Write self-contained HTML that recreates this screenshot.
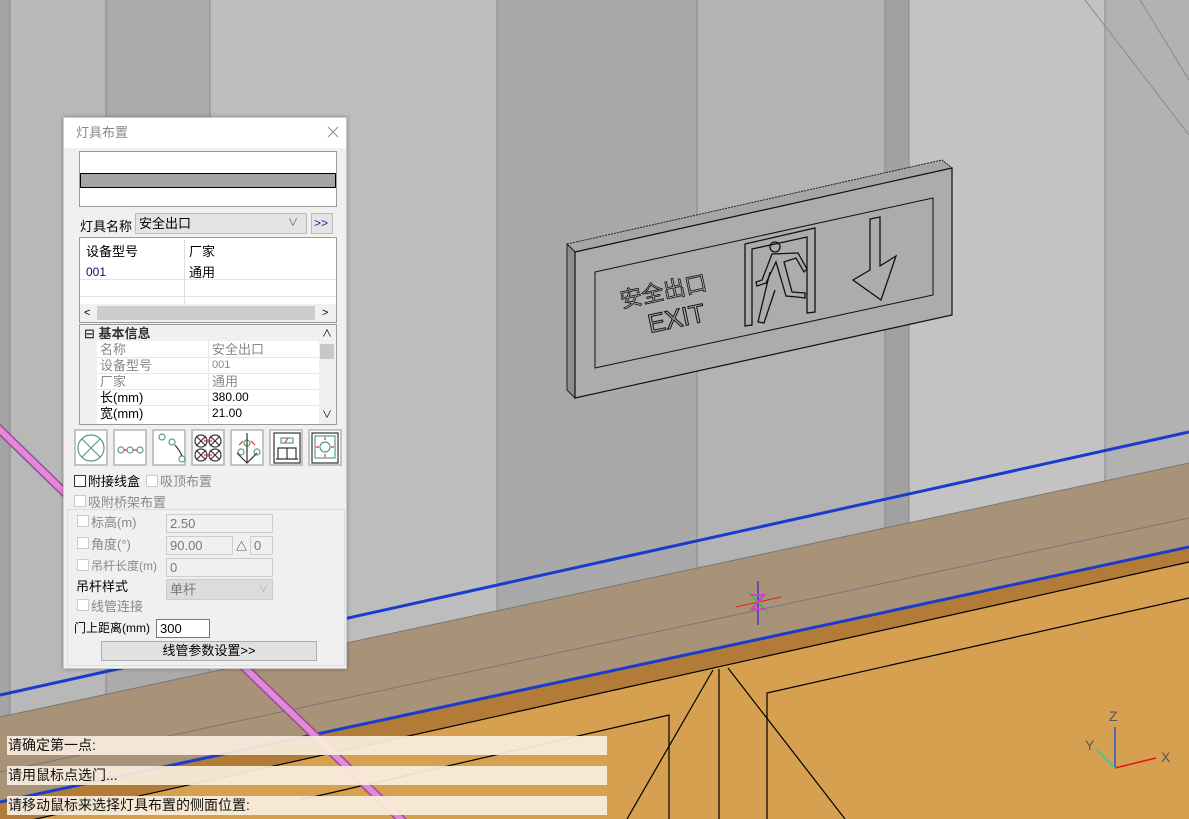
<!DOCTYPE html>
<html><head><meta charset="utf-8"><style>
*{box-sizing:border-box;margin:0;padding:0}
body{width:1189px;height:819px;overflow:hidden;position:relative;font-family:"Liberation Sans","Noto Sans CJK SC",sans-serif;font-size:13px;color:#000;background:#b4b4b4}
svg.bg{position:absolute;left:0;top:0}
.dlg{position:absolute;left:63px;top:117px;width:284px;height:552px;background:#f0f0f0;border:1px solid #c8c8c8;box-shadow:0 0 4px rgba(0,0,0,.3)}
.a{position:absolute}
.t{position:absolute;white-space:nowrap;line-height:15px}
.cb{position:absolute;width:12px;height:12px;border:1px solid #333;background:#fff}
.cb.g{border-color:#ccc}
.in{position:absolute;border:1px solid #ccc;background:#f0f0f0;color:#777;padding-left:3px;line-height:17px}
.gray{color:#888}
.bar{position:absolute;left:7px;width:600px;height:19px;background:rgba(250,238,222,.92);font-size:14px;line-height:19px;padding-left:1px;color:#111}
</style></head><body>
<svg class="bg" width="1189" height="819" viewBox="0 0 1189 819">
<rect x="0" y="0" width="1189" height="819" fill="#b0b0b0"/>
<rect x="0" y="0" width="10" height="819" fill="#a4a4a4"/>
<rect x="10" y="0" width="96" height="819" fill="#b8b8b8"/>
<rect x="106" y="0" width="104" height="819" fill="#ababab"/>
<rect x="210" y="0" width="287" height="819" fill="#bdbdbd"/>
<rect x="497" y="0" width="200" height="819" fill="#a9a9a9"/>
<rect x="697" y="0" width="188" height="819" fill="#b3b3b3"/>
<rect x="885" y="0" width="24" height="819" fill="#a2a2a2"/>
<rect x="909" y="0" width="196" height="819" fill="#c3c3c3"/>
<rect x="1105" y="0" width="84" height="819" fill="#b2b2b2"/>
<g stroke="#8a8a8a" stroke-width="1">
<line x1="10" y1="0" x2="10" y2="819"/><line x1="106" y1="0" x2="106" y2="819"/><line x1="210" y1="0" x2="210" y2="819"/><line x1="497" y1="0" x2="497" y2="819"/><line x1="697" y1="0" x2="697" y2="819"/><line x1="885" y1="0" x2="885" y2="819"/><line x1="909" y1="0" x2="909" y2="819"/><line x1="1105" y1="0" x2="1105" y2="819"/>
<line x1="1085" y1="0" x2="1189" y2="135"/><line x1="1140" y1="0" x2="1189" y2="80"/>
</g>
<line x1="0" y1="695" x2="1189" y2="432" stroke="#1a3ccc" stroke-width="3"/>
<polygon points="0,717 1189,463 1189,547 0,802" fill="#a89278"/>
<line x1="0" y1="717" x2="1189" y2="463" stroke="#777" stroke-width="1"/>
<line x1="0" y1="772" x2="1189" y2="518" stroke="#777" stroke-width="1"/>
<polygon points="0,802 1189,547 1189,562 0,827" fill="#b27c38"/>
<polygon points="0,827 1189,562 1189,819 0,819" fill="#d5a050"/>
<line x1="0" y1="802" x2="1189" y2="547" stroke="#1a3ccc" stroke-width="3"/>
<g stroke="#000" stroke-width="1.2" fill="none">
<line x1="0" y1="827" x2="1189" y2="562"/>
<polyline points="767,819 767,693 1189,598"/>
<polyline points="669,819 669,715 300,800"/>
<line x1="719" y1="669" x2="719" y2="819"/>
<line x1="713" y1="670" x2="627" y2="819"/>
<line x1="728" y1="668" x2="845" y2="819"/>
</g>
<line x1="-5" y1="425" x2="412" y2="830" stroke="#9a4c90" stroke-width="9"/>
<line x1="-5" y1="425" x2="412" y2="830" stroke="#e488dc" stroke-width="6"/>
<g stroke-width="1">
<line x1="758" y1="581" x2="758" y2="625" stroke="#1010ee"/>
<line x1="736" y1="607" x2="781" y2="597" stroke="#e02020"/>
<line x1="748" y1="592" x2="768" y2="613" stroke="#20c020"/>
<path d="M750,595 L764,595 L752,609 L766,609" stroke="#d040d0" stroke-width="2" fill="none"/>
</g>
<polygon points="567,244 942,160 952,168 575,252" fill="#a6a6a6" stroke="#222" stroke-width="1" stroke-dasharray="2,1"/>
<polygon points="567,244 575,252 575,398 567,390" fill="#8e8e8e" stroke="#222"/>
<polygon points="575,252 952,168 952,315 575,398" fill="#acacac" stroke="#111" stroke-width="1.2"/>
<polygon points="595,272 933,198 933,295 595,368" fill="none" stroke="#111"/>
<text x="0" y="0" font-family="Liberation Sans,Noto Sans CJK SC,sans-serif" font-size="22" fill="none" stroke="#111" stroke-width=".8" transform="translate(622,308) rotate(-12)">安全出口</text>
<text x="0" y="0" font-family="Liberation Sans,sans-serif" font-size="26" fill="none" stroke="#111" stroke-width="1" transform="translate(650,333) rotate(-12)">EXIT</text>
<g fill="none" stroke="#111" stroke-width="1.3">
<polygon points="745,244 815,228 815,312 807,313 807,237 752,249 752,325 745,326"/>
<circle cx="775" cy="247" r="5"/>
<path d="M772,254 L762,280 L756,282 L757,286 L766,283 L776,262 L786,296 L797,297 L805,298 L805,293 L792,292 L784,262 L796,258 L804,272 L807,269 L798,253 Z"/>
<path d="M770,272 L762,305 L758,322 L764,323 L775,290"/>
<path d="M875,218 L880,217 L880,266 L896,256 L881,300 L853,280 L870,270 L870,219 Z"/>
</g>
<g font-family="Liberation Sans,sans-serif" font-size="14" fill="#555">
<text x="1109" y="721">Z</text><text x="1085" y="750">Y</text><text x="1161" y="762">X</text></g>
<line x1="1115" y1="768" x2="1115" y2="727" stroke="#2255dd" stroke-width="1.5"/>
<line x1="1115" y1="768" x2="1156" y2="758" stroke="#ee1111" stroke-width="1.5"/>
<line x1="1115" y1="768" x2="1096" y2="749" stroke="#22ccaa" stroke-width="1.5"/>
</svg>

<div class="bar" style="top:736px">请确定第一点:</div>
<div class="bar" style="top:766px">请用鼠标点选门...</div>
<div class="bar" style="top:796px">请移动鼠标来选择灯具布置的侧面位置:</div>

<div class="dlg">
<div class="a" style="left:0;top:0;width:282px;height:30px;background:#fff"></div>
<div class="t" style="left:12px;top:7px;color:#888">灯具布置</div>
<svg class="a" style="left:263px;top:8px" width="12" height="12"><path d="M1,1L11,11M11,1L1,11" stroke="#888" stroke-width="1"/></svg>
<div class="a" style="left:15px;top:33px;width:258px;height:56px;background:#fff;border:1px solid #999"></div>
<div class="a" style="left:16px;top:55px;width:256px;height:15px;background:#a4a4a4;border:1px solid #000"></div>
<div class="t" style="left:16px;top:101px">灯具名称</div>
<div class="a" style="left:71px;top:95px;width:172px;height:21px;background:#e4e4e4;border:1px solid #bbb"></div>
<div class="t" style="left:75px;top:98px">安全出口</div>
<div class="t" style="left:224px;top:98px;color:#555;font-size:10px">∨</div>
<div class="a" style="left:247px;top:95px;width:22px;height:21px;background:#e4e4e4;border:1px solid #bbb"></div>
<div class="t" style="left:250px;top:98px;color:#1a2aa0;font-size:12px">&gt;&gt;</div>
<div class="a" style="left:15px;top:119px;width:258px;height:86px;background:#fff;border:1px solid #999"></div>
<div class="a" style="left:120px;top:122px;width:1px;height:64px;background:#ddd"></div>
<div class="a" style="left:16px;top:161px;width:256px;height:1px;background:#e4e4e4"></div>
<div class="a" style="left:16px;top:178px;width:256px;height:1px;background:#e4e4e4"></div>
<div class="t" style="left:22px;top:126px">设备型号</div>
<div class="t" style="left:125px;top:126px">厂家</div>
<div class="t" style="left:22px;top:147px;font-size:12px;color:#220066">001</div>
<div class="t" style="left:125px;top:147px">通用</div>
<div class="a" style="left:16px;top:186px;width:256px;height:18px;background:#f0f0f0"></div>
<div class="a" style="left:33px;top:188px;width:218px;height:14px;background:#cdcdcd"></div>
<div class="t" style="left:20px;top:188px;font-size:11px">&lt;</div>
<div class="t" style="left:258px;top:188px;font-size:11px">&gt;</div>
<div class="a" style="left:15px;top:206px;width:258px;height:101px;background:#fff;border:1px solid #999"></div>
<div class="a" style="left:16px;top:207px;width:239px;height:16px;background:#f0f0f0"></div>
<div class="a" style="left:16px;top:223px;width:17px;height:83px;background:#f0f0f0"></div>
<div class="a" style="left:255px;top:207px;width:17px;height:99px;background:#f0f0f0"></div>
<div class="a" style="left:256px;top:226px;width:14px;height:15px;background:#c8c8c8"></div>
<div class="t" style="left:258px;top:209px;font-size:10px">∧</div>
<div class="t" style="left:258px;top:290px;font-size:10px">∨</div>
<div class="t" style="left:20px;top:208px">⊟ <b style="color:#333">基本信息</b></div>
<div class="a" style="left:144px;top:223px;width:1px;height:83px;background:#e6e6e6"></div>
<div class="a" style="left:33px;top:239px;width:222px;height:1px;background:#e6e6e6"></div>
<div class="a" style="left:33px;top:255px;width:222px;height:1px;background:#e6e6e6"></div>
<div class="a" style="left:33px;top:271px;width:222px;height:1px;background:#e6e6e6"></div>
<div class="a" style="left:33px;top:287px;width:222px;height:1px;background:#e6e6e6"></div>
<div class="t gray" style="left:36px;top:224px">名称</div><div class="t gray" style="left:148px;top:224px">安全出口</div>
<div class="t gray" style="left:36px;top:240px">设备型号</div><div class="t gray" style="left:148px;top:240px;font-size:11px">001</div>
<div class="t gray" style="left:36px;top:256px">厂家</div><div class="t gray" style="left:148px;top:256px">通用</div>
<div class="t" style="left:36px;top:272px">长(mm)</div><div class="t" style="left:148px;top:272px;font-size:12px">380.00</div>
<div class="t" style="left:36px;top:288px">宽(mm)</div><div class="t" style="left:148px;top:288px;font-size:12px">21.00</div>
<svg class="a" style="left:10px;top:311px" width="270" height="37" viewBox="0 0 270 37">
<g fill="#fff" stroke="#c4c4c4" stroke-width="2"><rect x="1" y="1" width="32" height="35"/><rect x="40" y="1" width="32" height="35"/><rect x="79" y="1" width="32" height="35"/><rect x="118" y="1" width="32" height="35"/><rect x="157" y="1" width="32" height="35"/><rect x="196" y="1" width="32" height="35"/><rect x="235" y="1" width="32" height="35"/></g>
<g fill="none" stroke="#5a9a80" stroke-width="1.2">
<circle cx="17" cy="19" r="13"/><path d="M8,10 L26,28 M26,10 L8,28"/>
<circle cx="47" cy="21" r="3"/><circle cx="56" cy="21" r="3"/><circle cx="66" cy="21" r="3"/>
<circle cx="88" cy="8" r="3"/><circle cx="98" cy="13" r="3"/><circle cx="108" cy="30" r="3"/>
<circle cx="167" cy="23" r="3"/><circle cx="173" cy="14" r="3"/><circle cx="183" cy="23" r="3"/>
<rect x="207" y="9" width="12" height="5"/><rect x="241" y="7" width="20" height="22"/><circle cx="251" cy="18" r="5"/>
</g>
<g fill="none" stroke="#333" stroke-width="1.2">
<circle cx="127" cy="12" r="6"/><circle cx="141" cy="12" r="6"/><circle cx="127" cy="26" r="6"/><circle cx="141" cy="26" r="6"/>
<path d="M122,7l10,10M132,7l-10,10M136,7l10,10M146,7l-10,10M122,21l10,10M132,21l-10,10M136,21l10,10M146,21l-10,10"/>
<path d="M173,4 V34 M163,24 L173,34 L183,24"/><path d="M101,16 Q106,22 108,27"/>
<rect x="200" y="4" width="26" height="30"/><path d="M204,30 V19 H222 V30 M213,19 V30 M202,30 H224"/>
<rect x="238" y="4" width="26" height="30"/>
</g>
<g stroke="#e03030" stroke-width="1.2"><path d="M50,21h3M59,21h4M211,14l3,-5M245,18h-3M257,18h3M251,11V8M251,25v3M130,12h8M130,26h8M169,12l-4,4M177,12l4,4"/></g>
</svg>
<div class="cb" style="left:10px;top:357px"></div><div class="t" style="left:24px;top:356px">附接线盒</div>
<div class="cb g" style="left:82px;top:357px"></div><div class="t gray" style="left:96px;top:356px">吸顶布置</div>
<div class="cb g" style="left:10px;top:377px"></div><div class="t gray" style="left:24px;top:377px">吸附桥架布置</div>
<div class="a" style="left:3px;top:391px;width:278px;height:157px;border:1px solid #ddd"></div>
<div class="cb g" style="left:13px;top:397px"></div><div class="t gray" style="left:27px;top:397px">标高(m)</div>
<div class="in" style="left:102px;top:396px;width:107px;height:19px">2.50</div>
<div class="cb g" style="left:13px;top:419px"></div><div class="t gray" style="left:27px;top:419px">角度(°)</div>
<div class="in" style="left:102px;top:418px;width:67px;height:19px">90.00</div>
<div class="t" style="left:172px;top:422px;font-size:11px;color:#224">△</div>
<div class="in" style="left:186px;top:418px;width:23px;height:19px">0</div>
<div class="cb g" style="left:13px;top:441px"></div><div class="t gray" style="left:27px;top:441px;font-size:12px">吊杆长度(m)</div>
<div class="in" style="left:102px;top:440px;width:107px;height:19px">0</div>
<div class="t" style="left:12px;top:461px">吊杆样式</div>
<div class="in" style="left:102px;top:461px;width:107px;height:21px;background:#dcdcdc;line-height:19px">单杆<span style="position:absolute;right:4px;font-size:9px;color:#aaa">∨</span></div>
<div class="cb g" style="left:13px;top:481px"></div><div class="t gray" style="left:27px;top:481px">线管连接</div>
<div class="t" style="left:10px;top:503px;font-size:12px">门上距离(mm)</div>
<div class="a" style="left:92px;top:501px;width:54px;height:19px;background:#fff;border:1px solid #777;padding-left:3px;line-height:17px">300</div>
<div class="a" style="left:37px;top:523px;width:216px;height:20px;background:#e1e1e1;border:1px solid #adadad;text-align:center;line-height:18px">线管参数设置&gt;&gt;</div>
</div>
</body></html>
